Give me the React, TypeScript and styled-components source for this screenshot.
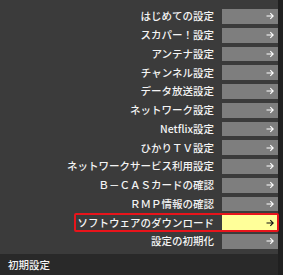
import React from "react";
import styled, { createGlobalStyle } from "styled-components";

const Global = createGlobalStyle`
  html, body { margin: 0; padding: 0; background: #3b3b3b; }
  body { font-family: "Noto Sans CJK JP", "Noto Sans", sans-serif; }
`;

const Screen = styled.div`
  width: 283px;
  height: 275px;
  display: flex;
  overflow: hidden;
`;

const MainColumn = styled.div`
  width: 278px;
  display: flex;
  flex-direction: column;
  background: #3b3b3b;
`;

const EdgeStrip = styled.div`
  width: 5px;
  background: #202020;
`;

const Menu = styled.div`
  flex: 1;
  padding-top: 9px;
  display: flex;
  flex-direction: column;
  gap: 4px;
`;

const Row = styled.div`
  height: 14.75px;
  display: flex;
  justify-content: flex-end;
`;

const RowInner = styled.div<{ $selected?: boolean }>`
  display: flex;
  align-items: center;
  height: 100%;
  position: relative;
  &::after {
    content: "";
    display: ${(p) => (p.$selected ? "block" : "none")};
    position: absolute;
    top: -2px;
    bottom: -2px;
    left: -4px;
    right: -1px;
    border: 2px solid #e8141b;
    border-radius: 2px;
    pointer-events: none;
  }
`;

const Label = styled.span`
  color: #f4f4f4;
  font-size: 10.5px;
  font-weight: 500;
  line-height: 14px;
  white-space: nowrap;
  margin-right: 8px;
`;

const Button = styled.div<{ $selected?: boolean }>`
  width: 56px;
  height: 100%;
  background: ${(p) => (p.$selected ? "#ffff99" : "#7e7e7e")};
  display: flex;
  align-items: center;
  justify-content: flex-end;
  padding-right: 4px;
  box-sizing: border-box;
  color: ${(p) => (p.$selected ? "#111" : "#fff")};
`;

const BottomBar = styled.div`
  height: 21px;
  background: #292929;
  display: flex;
  align-items: center;
  padding-left: 8px;
  color: #f4f4f4;
  font-size: 10.5px;
  font-weight: 500;
`;

const Arrow = () => (
  <svg width="8" height="8" viewBox="0 0 8 8" fill="none" stroke="currentColor" strokeWidth="1.1">
    <path d="M0.5 4 H7.2 M4.3 1.1 L7.2 4 L4.3 6.9" />
  </svg>
);

const items = [
  "はじめての設定",
  "スカパー！設定",
  "アンテナ設定",
  "チャンネル設定",
  "データ放送設定",
  "ネットワーク設定",
  "Netflix設定",
  "ひかりＴＶ設定",
  "ネットワークサービス利用設定",
  "Ｂ－ＣＡＳカードの確認",
  "ＲＭＰ情報の確認",
  "ソフトウェアのダウンロード",
  "設定の初期化",
];

const SELECTED = 11;

export default function App() {
  return (
    <>
      <Global />
      <Screen>
        <MainColumn>
          <Menu>
            {items.map((t, i) => (
              <Row key={t}>
                <RowInner $selected={i === SELECTED}>
                  <Label>{t}</Label>
                  <Button $selected={i === SELECTED}>
                    <Arrow />
                  </Button>
                </RowInner>
              </Row>
            ))}
          </Menu>
          <BottomBar>初期設定</BottomBar>
        </MainColumn>
        <EdgeStrip />
      </Screen>
    </>
  );
}
